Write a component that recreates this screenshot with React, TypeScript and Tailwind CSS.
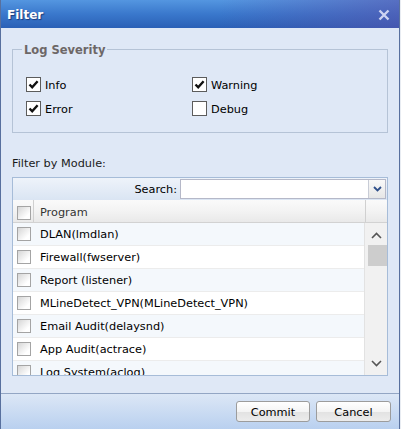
import React from "react";

const rows = [
  "DLAN(lmdlan)",
  "Firewall(fwserver)",
  "Report (listener)",
  "MLineDetect_VPN(MLineDetect_VPN)",
  "Email Audit(delaysnd)",
  "App Audit(actrace)",
  "Log System(aclog)",
];

function Check({ checked }: { checked?: boolean }) {
  return (
    <div className="w-[15px] h-[15px] border border-[#5c5c5c] bg-white flex items-center justify-center shrink-0">
      {checked && (
        <svg width="11" height="11" viewBox="0 0 11 11">
          <path d="M1.5 5.5 L4.2 8.3 L9.6 2.2" fill="none" stroke="#111" strokeWidth="2.4" />
        </svg>
      )}
    </div>
  );
}

function GridCheck() {
  return (
    <div className="w-[14px] h-[14px] border border-[#a4a4a4] bg-[linear-gradient(135deg,#d6d6d6,#ffffff_75%)] shrink-0" />
  );
}

function Button({ label, w }: { label: string; w: string }) {
  return (
    <button
      className={`${w} h-[21px] pt-[3px] rounded-[3px] border border-[#9c9c9c] bg-[linear-gradient(to_bottom,#ffffff,#f4f4f4_50%,#e2e2e2_51%,#ececec)] text-[11.3px] text-black`}
    >
      {label}
    </button>
  );
}

export default function App() {
  return (
    <div className="flex font-['DejaVu_Sans',sans-serif] text-[11.3px] text-black">
      <div className="w-[400px] h-[429px] flex flex-col border-x border-[#58709e]">
        {/* title */}
        <div className="h-[28px] flex items-center justify-between pl-[6px] pr-[9px] pt-px bg-[linear-gradient(to_right,rgba(90,80,170,0)_55%,rgba(90,80,170,0.55)),linear-gradient(to_bottom,#5496e0,#3a78cc_50%,#2a60b6)]">
          <span className="text-white font-bold text-[12px] [text-shadow:1px_1px_1px_#1c3c7c]">Filter</span>
          <svg width="12" height="12" viewBox="0 0 12 12">
            <path d="M1.5 1.5 L10.5 10.5 M10.5 1.5 L1.5 10.5" stroke="#cdd3f2" strokeWidth="2.4" />
          </svg>
        </div>

        {/* body */}
        <div className="flex-1 bg-[#dfe8f6] px-[11px] pb-[17px]">
          <fieldset className="mt-[14px] border border-[#b5c3d6] px-[13px] pt-[21px] pb-[16px]">
            <legend className="ml-[-4px] px-[2px] h-[14px] leading-[16px] font-bold text-[11.5px] text-[#6d6767]">
              Log Severity
            </legend>
            <div className="grid grid-cols-[166px_1fr] gap-y-[9px]">
              <label className="flex items-center gap-[4px] h-[15px]">
                <Check checked /> <span className="pt-[3px]">Info</span>
              </label>
              <label className="flex items-center gap-[4px] h-[15px]">
                <Check checked /> <span className="pt-[3px]">Warning</span>
              </label>
              <label className="flex items-center gap-[4px] h-[15px]">
                <Check checked /> <span className="pt-[3px]">Error</span>
              </label>
              <label className="flex items-center gap-[4px] h-[15px]">
                <Check /> <span className="pt-[3px]">Debug</span>
              </label>
            </div>
          </fieldset>

          <div className="mt-[23px] h-[14px] leading-[16px] text-[#1a1a1a]">Filter by Module:</div>

          <div className="mt-[7px] border border-[#a6bcd8] bg-white">
            {/* toolbar */}
            <div className="h-[22px] flex items-center justify-end pr-px bg-[linear-gradient(to_bottom,#eef3fa,#dae5f3)]">
              <span className="mr-[3px] pt-[2px]">Search:</span>
              <div className="w-[206px] h-[20px] flex border border-[#b5b8c8] bg-white">
                <div className="flex-1" />
                <div className="w-[17px] border-l border-[#c8ccd6] flex items-center justify-center bg-[linear-gradient(to_bottom,#f9f9f9,#e6e6e6)]">
                  <svg width="9" height="6" viewBox="0 0 9 6">
                    <path d="M1 1 L4.5 4.5 L8 1" fill="none" stroke="#2f4f8a" strokeWidth="1.8" />
                  </svg>
                </div>
              </div>
            </div>

            {/* header */}
            <div className="h-[23px] flex border-b border-[#d2d2d2] bg-[linear-gradient(to_bottom,#fafafa,#f3f3f3_50%,#e9e9e9)] text-[#333]">
              <div className="w-[21px] border-r border-[#d0d0d0] flex items-center pl-[4px] pt-[3px]">
                <GridCheck />
              </div>
              <div className="flex-1 flex items-center pl-[6px] pt-[5px]">Program</div>
              <div className="w-[22px] border-l border-[#d0d0d0]" />
            </div>

            {/* rows */}
            <div className="h-[152px] flex overflow-hidden">
              <div className="flex-1">
                {rows.map((r, i) => (
                  <div
                    key={r}
                    className={`h-[23px] flex items-center border-b border-[#ececec] pl-[4px] ${i % 2 === 0 ? "bg-[#f4f8fc]" : "bg-white"}`}
                  >
                    <GridCheck />
                    <span className="ml-[9px] pt-[3px]">{r}</span>
                  </div>
                ))}
              </div>
              <div className="w-[23px] border-l border-[#e2e2e2] bg-[#f1f1f1] flex flex-col items-center">
                <svg className="mt-[9px]" width="11" height="7" viewBox="0 0 11 7">
                  <path d="M1 6 L5.5 1.5 L10 6" fill="none" stroke="#555" strokeWidth="1.6" />
                </svg>
                <div className="mt-[6px] ml-[2px] w-[19px] h-[21px] bg-[#cdcdcd]" />
                <div className="flex-1" />
                <svg className="mb-[8px]" width="11" height="7" viewBox="0 0 11 7">
                  <path d="M1 1 L5.5 5.5 L10 1" fill="none" stroke="#555" strokeWidth="1.6" />
                </svg>
              </div>
            </div>
          </div>
        </div>

        {/* footer */}
        <div className="h-[36px] border-t border-[#93a6c4] bg-[linear-gradient(to_bottom,#dce7f6,#b9d0ef)] flex justify-end items-start pt-[7px] pr-[8px] gap-[6px]">
          <Button label="Commit" w="w-[74px]" />
          <Button label="Cancel" w="w-[75px]" />
        </div>
      </div>
      <div className="w-px h-[429px] bg-[#e8ecf2]" />
    </div>
  );
}
